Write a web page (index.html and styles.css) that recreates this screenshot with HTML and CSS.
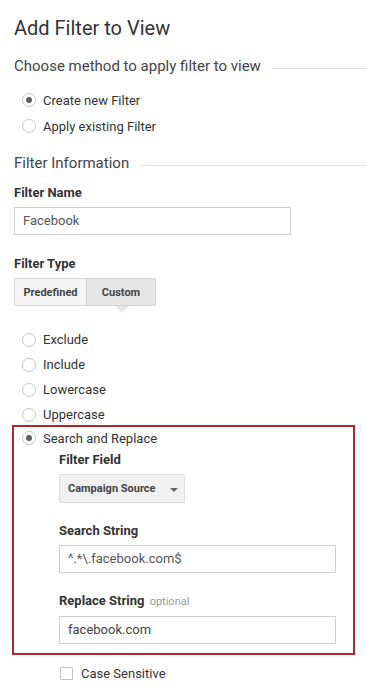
FILE: index.html
```html
<!DOCTYPE html>
<html>
<head>
<meta charset="utf-8">
<link rel="stylesheet" href="styles.css">
</head>
<body>
<div class="page">
  <h1 class="title">Add Filter to View</h1>
  <div class="section-head"><span>Choose method to apply filter to view</span></div>
  <div class="radios radios-method">
    <div class="radio-row"><span class="radio checked"></span><span>Create new Filter</span></div>
    <div class="radio-row"><span class="radio"></span><span>Apply existing Filter</span></div>
  </div>
  <div class="section-head section-info"><span>Filter Information</span></div>
  <div class="label label-name">Filter Name</div>
  <div class="input">Facebook</div>
  <div class="label label-type">Filter Type</div>
  <div class="seg">
    <div class="seg-btn">Predefined</div>
    <div class="seg-btn active">Custom</div>
  </div>
  <div class="radios radios-type">
    <div class="radio-row"><span class="radio"></span><span>Exclude</span></div>
    <div class="radio-row"><span class="radio"></span><span>Include</span></div>
    <div class="radio-row"><span class="radio"></span><span>Lowercase</span></div>
    <div class="radio-row"><span class="radio"></span><span>Uppercase</span></div>
  </div>
  <div class="highlight">
    <div class="radio-row first"><span class="radio checked"></span><span>Search and Replace</span></div>
    <div class="sub">
      <div class="label label-field">Filter Field</div>
      <div class="select"><span>Campaign Source</span><span class="caret"></span></div>
      <div class="label label-search">Search String</div>
      <div class="input">^.*\.facebook.com$</div>
      <div class="label label-replace">Replace String <span class="opt">optional</span></div>
      <div class="input input-strong">facebook.com</div>
    </div>
  </div>
  <div class="check-row"><span class="checkbox"></span><span>Case Sensitive</span></div>
</div>
</body>
</html>
```

FILE: styles.css
```css
* { box-sizing: border-box; }
html, body { margin: 0; padding: 0; background: #fff; }
body {
  font-family: Roboto, "Noto Sans", Arial, sans-serif;
  color: #333;
  width: 367px;
  height: 696px;
  overflow: hidden;
}
.page { padding-left: 14px; }

.title {
  margin: 16px 0 0;
  font-size: 20px;
  line-height: 24px;
  font-weight: 400;
  color: #333;
}

.section-head {
  display: flex;
  align-items: center;
  margin-top: 16px;
  height: 20px;
  font-size: 15px;
  line-height: 20px;
  color: #444;
}
.section-head::after {
  content: "";
  flex: 1;
  height: 1px;
  background: #e0e0e0;
  margin-left: 11px;
  margin-top: 4px;
}
.section-info { margin-top: 14px; }

.radios { font-size: 13px; color: #333; }
.radios-method { margin-top: 11px; }
.radios-type { margin-top: 21px; }
.radio-row {
  display: flex;
  align-items: center;
  height: 25px;
  padding-left: 8px;
}
.radios-method .radio-row { height: 26px; }
.radio {
  width: 14px;
  height: 14px;
  border: 1px solid #c4c4c4;
  border-radius: 50%;
  margin-right: 7px;
  background: #fff;
  position: relative;
  flex: none;
}
.radio.checked::after {
  content: "";
  position: absolute;
  left: 3px;
  top: 3px;
  width: 6px;
  height: 6px;
  border-radius: 50%;
  background: #5f5f5f;
}

.label {
  font-size: 13px;
  line-height: 18px;
  font-weight: 700;
  color: #333;
}
.label-name { margin-top: 11px; }
.label-type { margin-top: 20px; }

.input {
  margin-top: 5px;
  width: 277px;
  height: 28px;
  border: 1px solid #cfcfcf;
  padding-left: 8px;
  font-size: 13px;
  line-height: 26px;
  color: #555;
}
.input-strong { color: #444; }

.seg {
  margin-top: 5px;
  display: flex;
  width: 142px;
  height: 28px;
}
.seg-btn {
  height: 28px;
  border: 1px solid #d9d9d9;
  background: #f5f5f5;
  font-size: 11px;
  font-weight: 700;
  color: #444;
  display: flex;
  align-items: center;
  justify-content: center;
}
.seg-btn:first-child {
  width: 72px;
  border-radius: 2px 0 0 2px;
  border-right: none;
}
.seg-btn.active {
  width: 70px;
  background: #e6e6e6;
  border-color: #d2d2d2;
  border-radius: 0 2px 2px 0;
  position: relative;
}
.seg-btn.active::after {
  content: "";
  position: absolute;
  left: 28px;
  top: 27px;
  border-left: 7px solid transparent;
  border-right: 7px solid transparent;
  border-top: 7px solid #e6e6e6;
}

.highlight {
  margin-top: -2px;
  margin-left: -2px;
  width: 343px;
  border: 2px solid #a9282f;
  padding-bottom: 9px;
}
.highlight .radio-row {
  font-size: 13px;
  height: 22px;
  padding-left: 8px;
}
.sub { padding-left: 45px; }
.label-field { margin-top: 2px; }
.select {
  margin-top: 5px;
  width: 126px;
  height: 29px;
  background: #f1f1f1;
  border: 1px solid #dedede;
  border-radius: 2px;
  display: flex;
  align-items: center;
  padding-left: 8px;
  font-size: 11px;
  font-weight: 700;
  color: #444;
}
.caret {
  margin-left: 14px;
  margin-top: 2px;
  border-left: 4px solid transparent;
  border-right: 4px solid transparent;
  border-top: 4px solid #666;
}
.label-search { margin-top: 19px; }
.label-replace { margin-top: 19px; }
.opt {
  font-size: 11px;
  font-weight: 400;
  color: #999;
  margin-left: 2px;
}

.check-row {
  display: flex;
  align-items: center;
  margin-top: 8px;
  height: 20px;
  padding-left: 46px;
  font-size: 13px;
  color: #333;
}
.checkbox {
  width: 13px;
  height: 13px;
  border: 1px solid #c4c4c4;
  border-radius: 1px;
  margin-right: 8px;
  flex: none;
}
```
